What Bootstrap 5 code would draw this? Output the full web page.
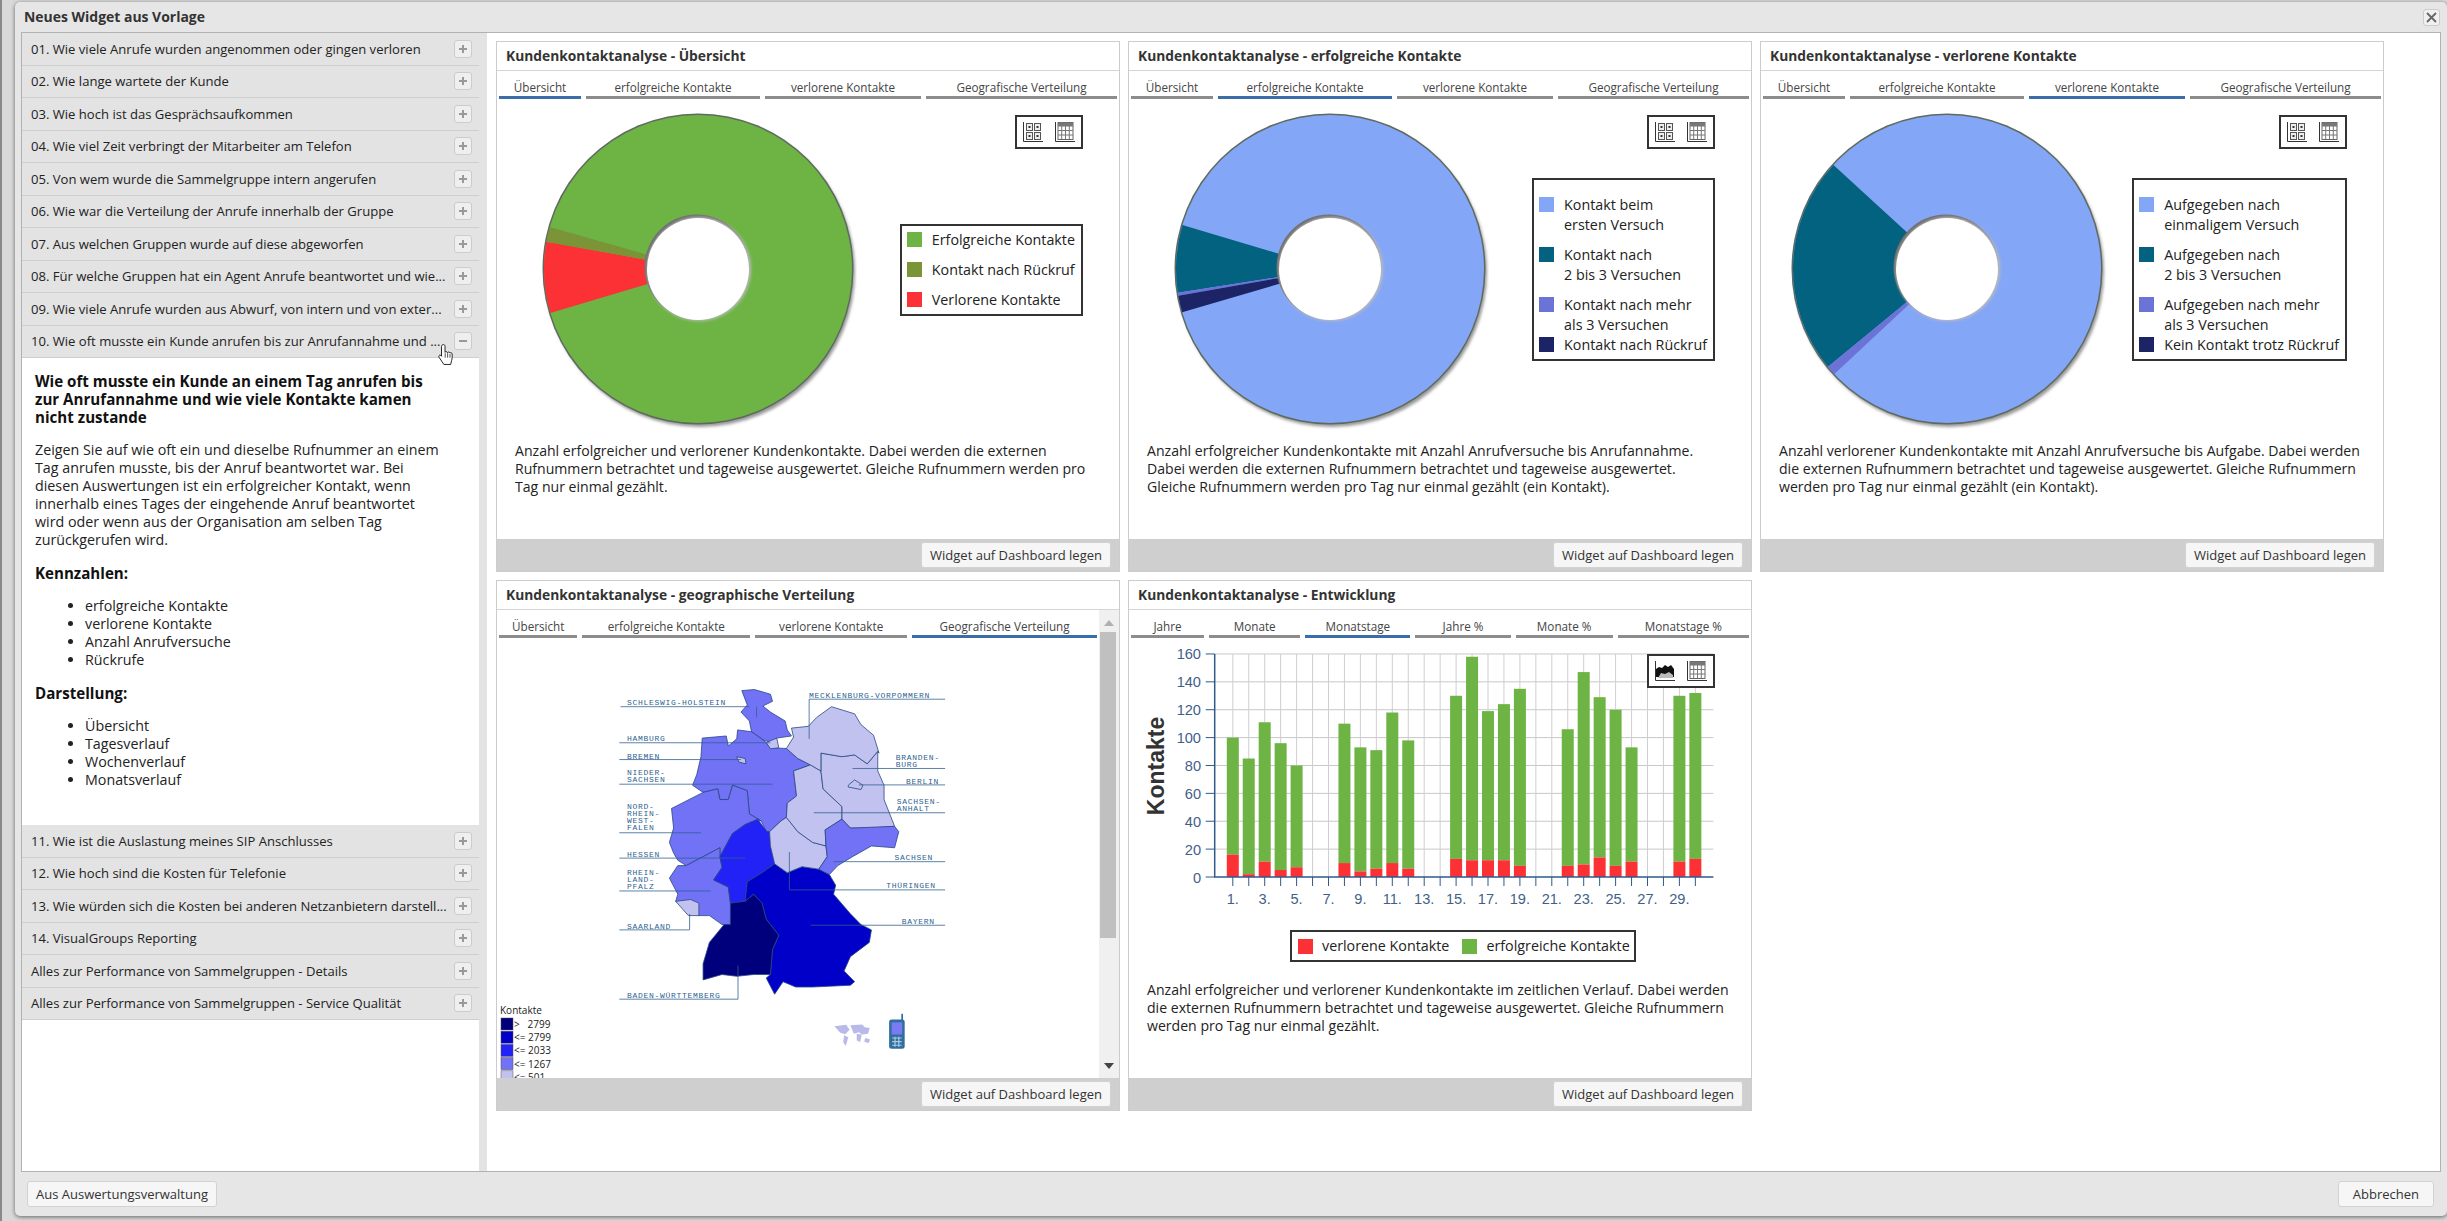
<!doctype html>
<html lang="de">

<head>
    <meta charset="utf-8">
    <meta name="viewport" content="width=device-width, initial-scale=1">
    <title>Neues Widget aus Vorlage</title>
    <link href="https://cdn.jsdelivr.net/npm/bootstrap@5.3.5/dist/css/bootstrap.min.css" rel="stylesheet">
    <style>
        html, body { height: 100%; overflow: hidden; }
        body {
            background: #d9d9d9;
            border-left: 2px solid #8a8a8a;
            font-family: "Open Sans", "Noto Sans", sans-serif;
            font-size: 13.07px;
            line-height: 18px;
            color: #222;
        }

        .wiz-window {
            width: 2432px;
            height: 1214px;
            margin: 2px 0 0 13px;
            background: #e6e6e6;
            border-radius: 5px;
            box-shadow: 0 1px 4px rgba(0, 0, 0, .55);
        }

        .wiz-title { height: 30px; padding-left: 9px; font-size: 13.96px; font-weight: 700; color: #333; }
        .wiz-close { width: 17px; height: 17px; margin-right: 7px; background: #f0f0f0; border: 1px solid #ccc; border-radius: 3px; }

        .wiz-main { width: 2420px; height: 1140px; margin-left: 6px; background: #fff; border: 1px solid #b2b2b2; }
        .wiz-foot { height: 44px; padding: 0 13px 0 12px; }

        .side { width: 457px; flex: none; position: relative; }
        .side-gap { width: 8px; flex: none; background: #e3e3e3; }
        .side .list-group-item {
            height: 32.5px;
            padding: 0 7px 0 9px;
            background: #e3e3e3;
            border: 0;
            border-bottom: 1px solid #cfcfcf;
            border-radius: 0;
            color: #222;
            white-space: nowrap;
        }
        .toggle-box { width: 18px; height: 18px; flex: none; background: #efefef; border: 1px solid #ccc; border-radius: 3px; }

        .side-detail { height: 467px; padding: 14px 12px 0 13px; color: #222; font-size: 14.27px; }
        .side-detail p, .side-detail ul { margin-bottom: 15px; }
        .side-detail ul { padding-left: 50px; }
        .side-detail b { display: block; font-size: 15.14px; color: #111; }
        .hand-cursor { position: absolute; left: 416px; top: 310px; }

        .cards-pane { padding: 8px 0 0 9px; gap: 8px; align-content: flex-start; }
        .widget.card { width: 624px; height: 531px; border: 1px solid #ccc; border-radius: 0; background: #fff; }
        .widget .card-header { height: 29px; flex: none; padding: 0 0 0 9px; background: #fff; border-bottom: 1px solid #d5d5d5; border-radius: 0; font-size: 13.8px; font-weight: 700; color: #333; display: flex; align-items: center; }
        .widget .card-footer { height: 32px; flex: none; padding: 0 8px 0 0; background: #cfcfcf; border: 0; border-radius: 0; }
        .btn.wiz-btn { height: 26px; padding: 0 8px; font-size: 13px; line-height: 24px; color: #333; background: #f6f6f6; border: 1px solid #d2d2d2; border-radius: 3px; }
        .btn.wiz-btn.is-wide { padding: 0 14px; }

        .tabs-row { height: 28px; padding: 0 2px; gap: 5px; flex: none; }
        .tab-item { text-align: center; font-size: 11.7px; line-height: 16px; padding-top: 8px; color: #444; border-bottom: 3px solid #8c8c8c; white-space: nowrap; overflow: hidden; }
        .tab-item.is-on { border-bottom-color: #3b6ea8; }

        .chart-zone { height: 343px; position: relative; flex: none; }
        .pie-svg { width: 360px; height: 343px; display: block; flex: none; }
        .icon-box { position: absolute; top: 16px; right: 36px; width: 68px; height: 34px; background: #fff; border: 2px solid #333; padding: 4px 6px; gap: 12px; }
        .chart-legend { background: #fff; border: 2px solid #333; font-size: 14.3px; line-height: 20px; color: #222; white-space: nowrap; }
        .legend-col { margin: 0 36px 2px auto; padding: 4px 6px 4px 5px; }
        .legend-row { margin-bottom: 10px; }
        .legend-row.tight { margin-bottom: 0; }
        .legend-col.has-top { padding-top: 14.5px; padding-bottom: 4px; }
        .legend-swatch { width: 15px; height: 15px; flex: none; margin: 2.5px 10px 0 0; }
        .legend-wide { width: 346px; height: 32px; margin: 7px 0 0 161px; padding: 0 6px; }
        .legend-wide .legend-swatch { margin: 0 9px 0 0; }
        .legend-gap { margin-right: 13px; }

        .widget-note { padding: 0 6px 0 18px; font-size: 14.09px; line-height: 18px; color: #222; white-space: nowrap; }

        .geo-pane { min-height: 0; }
        .geo-col { min-width: 0; }
        .geo-view { overflow: hidden; flex: 1 1 auto; }
        .geo-svg { display: block; width: 602px; height: 440px; }
        .scroll-rail { width: 20px; flex: none; background: #f0f0f0; position: relative; }
        .scroll-thumb { width: 16px; height: 306px; margin: 22px 0 0 1px; background: #c0c0c0; }
        .scroll-up, .scroll-down { position: absolute; left: 5px; width: 0; height: 0; border-left: 5px solid transparent; border-right: 5px solid transparent; }
        .scroll-up { top: 10px; border-bottom: 6px solid #b0b0b0; }
        .scroll-down { bottom: 9px; border-top: 6px solid #444; }
    </style>
</head>

<body>
    <div class="wiz-window d-flex flex-column">
        <div class="wiz-title d-flex align-items-center justify-content-between">
            <span>Neues Widget aus Vorlage</span>
            <span class="wiz-close d-flex align-items-center justify-content-center">
                <svg width="11" height="11" viewBox="0 0 11 11"><path d="M1 1 10 10M10 1 1 10" stroke="#666" stroke-width="1.8" /></svg>
            </span>
        </div>

        <div class="wiz-main d-flex">
            <div class="side">
                <div class="list-group" id="sideList"></div>
                <svg class="hand-cursor" width="18" height="24" viewBox="0 0 20 26">
                    <path d="M6 1.500c1.200 0 1.800.8 1.800 2V10c.3-1 2.400-1 2.700.3.5-.9 2.400-.8 2.700.5.6-.7 2.400-.4 2.500 1 .1 3 .2 5-.6 7.500l-1 4.200H6.500L1.500 16c-.8-1.200-.7-2.200 0-2.600.8-.5 1.700-.1 2.400 1V3.500c0-1.200.8-2 2.100-2z" fill="#fff" stroke="#111" stroke-width="1" />
                    <path d="M8 11v5M10.700 11v5M13.300 12v4" stroke="#111" stroke-width=".8" />
                </svg>
            </div>
            <div class="side-gap"></div>
            <div class="cards-pane d-flex flex-wrap flex-grow-1" id="cardsPane"></div>
        </div>

        <div class="wiz-foot d-flex align-items-center justify-content-between">
            <button class="btn wiz-btn">Aus Auswertungsverwaltung</button>
            <button class="btn wiz-btn is-wide">Abbrechen</button>
        </div>
    </div>

    <script src="https://cdn.jsdelivr.net/npm/bootstrap@5.3.5/dist/js/bootstrap.bundle.min.js"></script>
    <script>
        var rows = [
            "01. Wie viele Anrufe wurden angenommen oder gingen verloren",
            "02. Wie lange wartete der Kunde",
            "03. Wie hoch ist das Gesprächsaufkommen",
            "04. Wie viel Zeit verbringt der Mitarbeiter am Telefon",
            "05. Von wem wurde die Sammelgruppe intern angerufen",
            "06. Wie war die Verteilung der Anrufe innerhalb der Gruppe",
            "07. Aus welchen Gruppen wurde auf diese abgeworfen",
            "08. Für welche Gruppen hat ein Agent Anrufe beantwortet und wie...",
            "09. Wie viele Anrufe wurden aus Abwurf, von intern und von exter...",
            "10. Wie oft musste ein Kunde anrufen bis zur Anrufannahme und ...",
            "11. Wie ist die Auslastung meines SIP Anschlusses",
            "12. Wie hoch sind die Kosten für Telefonie",
            "13. Wie würden sich die Kosten bei anderen Netzanbietern darstell...",
            "14. VisualGroups Reporting",
            "Alles zur Performance von Sammelgruppen - Details",
            "Alles zur Performance von Sammelgruppen - Service Qualität"
        ];

        var detail =
            '<div class="side-detail">' +
            '<p><b>Wie oft musste ein Kunde an einem Tag anrufen bis<br>zur Anrufannahme und wie viele Kontakte kamen<br>nicht zustande</b></p>' +
            '<p>Zeigen Sie auf wie oft ein und dieselbe Rufnummer an einem<br>Tag anrufen musste, bis der Anruf beantwortet war. Bei<br>diesen Auswertungen ist ein erfolgreicher Kontakt, wenn<br>innerhalb eines Tages der eingehende Anruf beantwortet<br>wird oder wenn aus der Organisation am selben Tag<br>zurückgerufen wird.</p>' +
            '<p><b>Kennzahlen:</b></p>' +
            '<ul><li>erfolgreiche Kontakte</li><li>verlorene Kontakte</li><li>Anzahl Anrufversuche</li><li>Rückrufe</li></ul>' +
            '<p><b>Darstellung:</b></p>' +
            '<ul><li>Übersicht</li><li>Tagesverlauf</li><li>Wochenverlauf</li><li>Monatsverlauf</li></ul>' +
            '</div>';

        var sideHtml = "";
        for (var i = 0; i < rows.length; i++) {
            var sign = i == 9
                ? '<path d="M4 8h8" stroke="#999" stroke-width="2"/>'
                : '<path d="M4 8h8M8 4v8" stroke="#999" stroke-width="2"/>';
            sideHtml += '<div class="list-group-item d-flex align-items-center justify-content-between"><span>' + rows[i] + '</span>' +
                '<span class="toggle-box d-flex align-items-center justify-content-center"><svg width="16" height="16" viewBox="0 0 16 16">' + sign + '</svg></span></div>';
            if (i == 9) sideHtml += detail;
        }
        document.getElementById("sideList").innerHTML = sideHtml;

        var GREEN = "#6db444", OLIVE = "#7b9438", RED = "#fb3135", SKY = "#84a6f6", TEAL = "#03627f", VIOLET = "#6b73d6", NAVY = "#1c2466";
        var stdTabs = ["Übersicht", "erfolgreiche Kontakte", "verlorene Kontakte", "Geografische Verteilung"];
        var stdW = [82, 174, 156, 191];

        function wedge(cx, cy, r0, r1, a, b, color) {
            function pt(r, d) {
                var t = d * Math.PI / 180;
                return (cx + r * Math.sin(t)).toFixed(2) + " " + (cy - r * Math.cos(t)).toFixed(2);
            }
            return '<path fill="' + color + '" d="M' + pt(r1, a) + ' A' + r1 + ' ' + r1 + ' 0 0 1 ' + pt(r1, b) + ' L' + pt(r0, b) + ' A' + r0 + ' ' + r0 + ' 0 0 0 ' + pt(r0, a) + 'Z"/>';
        }

        function pie(cx, base, parts) {
            var cy = 170;
            var s = '<svg class="pie-svg" viewBox="0 0 360 343">';
            s += '<defs><filter id="soft" x="-10%" y="-10%" width="120%" height="120%"><feGaussianBlur stdDeviation="1.5"/></filter></defs>';
            s += '<circle cx="' + (cx + 2) + '" cy="' + (cy + 3) + '" r="155" fill="#9a9a9a" filter="url(#soft)"/>';
            s += '<circle cx="' + cx + '" cy="' + cy + '" r="155.5" fill="#5f6a5f"/>';
            s += '<circle cx="' + cx + '" cy="' + cy + '" r="154" fill="' + base + '"/>';
            for (var i = 0; i < parts.length; i++) s += wedge(cx, cy, 50, 154, parts[i][1], parts[i][2], parts[i][0]);
            s += '<circle cx="' + (cx - 1) + '" cy="' + (cy - 2) + '" r="52.5" fill="#6e6e6e"/>';
            s += '<circle cx="' + (cx + 1) + '" cy="' + cy + '" r="52" fill="#bbb" filter="url(#soft)"/>';
            s += '<circle cx="' + cx + '" cy="' + cy + '" r="51" fill="#fff"/>';
            return s + '</svg>';
        }

        function axisIcon(inner) {
            return '<svg width="20" height="21" viewBox="0 0 20 21"><path d="M.5 1v19.5H20" fill="none" stroke="#333" stroke-width="1"/>' + inner + '</svg>';
        }
        var gridIcon = axisIcon('<g fill="#eee" stroke="#555"><rect x="3.5" y="2.5" width="6" height="7"/><rect x="11.5" y="2.5" width="6" height="7"/><rect x="3.5" y="11.5" width="6" height="7"/><rect x="11.5" y="11.5" width="6" height="7"/></g><g fill="#333"><rect x="5.5" y="5" width="2" height="2"/><rect x="13.5" y="5" width="2" height="2"/><rect x="5.5" y="14" width="2" height="2"/><rect x="13.5" y="14" width="2" height="2"/></g>');
        var tableIcon = axisIcon('<rect x="3" y="1.5" width="15" height="17" fill="#fff" stroke="#666"/><rect x="3" y="1.5" width="15" height="4" fill="#777"/><path d="M6.7 2v16M10.5 2v16M14.3 2v16M3 9.5h15M3 14h15" stroke="#777" stroke-width="1"/>');
        var areaIcon = axisIcon('<path d="M1 17V9l3-2 3 1 3-3 3 2 3-2 3 4v8z" fill="#111"/><path d="M3 18l3-5 4 1 4-2 4 3v3z" fill="#bbb"/>');

        function iconBox(first) {
            return '<div class="icon-box d-flex">' + first + tableIcon + '</div>';
        }

        function tabs(names, widths, on) {
            var s = '<div class="tabs-row d-flex">';
            for (var i = 0; i < names.length; i++) {
                s += '<div class="tab-item' + (i == on ? ' is-on' : '') + '" style="flex:' + widths[i] + ' 1 0">' + names[i] + '</div>';
            }
            return s + '</div>';
        }

        function legend(items, extra) {
            var s = '<div class="chart-legend legend-col ' + (extra || '') + '">';
            for (var i = 0; i < items.length; i++) {
                s += '<div class="legend-row d-flex' + (items[i][2] ? ' tight' : '') + '"><span class="legend-swatch" style="background:' + items[i][0] + '"></span><span>' + items[i][1] + '</span></div>';
            }
            return s + '</div>';
        }

        function footer() {
            return '<div class="card-footer d-flex align-items-center justify-content-end mt-auto"><button class="btn wiz-btn">Widget auf Dashboard legen</button></div>';
        }

        function card(title, body) {
            return '<div class="card widget"><div class="card-header">' + title + '</div>' + body + footer() + '</div>';
        }

        function pieCard(title, on, cx, base, parts, items, extra, note) {
            return card(title, tabs(stdTabs, stdW, on) +
                '<div class="chart-zone d-flex align-items-center">' + pie(cx, base, parts) + legend(items, extra) + iconBox(gridIcon) + '</div>' +
                '<div class="widget-note">' + note + '</div>');
        }

        // Karte: Koordinaten aus dem Referenzbild, Labels als echter Text
        var LIGHT = "#c2c2f0", MID = "#7272f6";
        var states = [
            [MID, "622,335 652,332 690,345 695,365 672,378 690,395 725,420 730,445 740,462 705,468 690,478 675,475 645,450 640,420 620,395 635,375"],
            [MID, "528,468 585,462 590,490 610,470 612,445 645,450 675,475 690,495 728,497 755,525 785,543 745,560 752,630 730,650 728,690 715,700 688,730 680,730 668,700 640,680 635,615 600,600 590,640 570,640 565,610 530,620 505,600 515,570 525,520"],
            [MID, "455,665 530,620 565,610 570,640 590,640 600,600 635,615 640,680 668,700 660,695 630,710 600,735 570,800 570,775 530,800 490,825 470,810 460,790 450,760 460,720"],
            [MID, "570,775 570,800 575,830 555,865 590,885 595,930 595,990 575,990 545,965 520,965 465,925 470,905 450,860 470,825 490,825 530,800"],
            ["#2222f6", "660,695 672,715 682,730 688,730 690,770 700,820 670,845 635,870 630,925 595,930 590,885 555,865 575,830 570,800 600,735 630,710"],
            [LIGHT, "465,925 500,920 520,930 520,965 495,965"],
            ["#0000c8", "635,870 670,845 700,820 730,845 765,828 805,835 830,850 845,880 840,905 880,960 905,990 930,1005 925,1040 880,1080 865,1120 890,1150 880,1160 790,1165 750,1165 720,1150 700,1185 680,1140 690,1130 695,1060 710,1020 680,975 670,930 650,905 630,925"],
            ["#00007c", "595,930 630,925 650,905 670,930 680,975 710,1020 695,1060 690,1130 650,1130 610,1135 575,1130 530,1145 530,1100 545,1040 580,990 595,990"],
            [LIGHT, "688,730 715,700 728,690 755,730 790,760 822,770 825,800 805,835 765,828 730,845 700,820 690,770"],
            [LIGHT, "745,560 785,543 810,560 815,610 860,660 860,695 820,725 822,770 790,760 755,730 728,690 730,650 752,630"],
            [LIGHT, "810,510 860,520 890,515 920,540 945,505 945,560 960,600 960,640 985,715 925,720 880,720 860,695 860,660 815,610 810,560"],
            [LIGHT, "740,440 780,435 800,410 835,380 890,400 905,430 935,460 948,510 945,505 920,540 890,515 860,520 810,510 810,560 785,543 755,525 728,497 745,465"],
            [MID, "820,725 860,695 880,720 985,715 995,730 985,775 930,770 885,800 850,825 830,850 805,835 825,800 822,770"],
            [LIGHT, "680,480 705,468 710,495 690,498"],
            [LIGHT, "610,520 630,525 632,540 615,535"],
            [LIGHT, "875,600 890,585 910,600 905,612 875,605"]
        ];
        var mapLabels = [
            [349, 368, "SCHLESWIG-HOLSTEIN"], [782, 346, "MECKLENBURG-VORPOMMERN"], [349, 468, "HAMBURG"], [349, 517, "BREMEN"],
            [349, 564, "NIEDER-"], [349, 583, "SACHSEN"], [349, 657, "NORD-"], [349, 677, "RHEIN-"], [349, 698, "WEST-"], [349, 718, "FALEN"],
            [349, 792, "HESSEN"], [349, 842, "RHEIN-"], [349, 862, "LAND-"], [349, 883, "PFALZ"], [349, 993, "SAARLAND"], [349, 1186, "BADEN-WÜRTTEMBERG"],
            [988, 521, "BRANDEN-"], [988, 541, "BURG"], [1012, 588, "BERLIN"], [990, 644, "SACHSEN-"], [990, 664, "ANHALT"],
            [985, 802, "SACHSEN"], [965, 879, "THÜRINGEN"], [1002, 980, "BAYERN"]
        ];
        var mapLines = "M334 380H640M657 380V410M782 359H1105M782 359V470M331 481H690M331 528H620M331 597H695M331 733H525M331 804H630M331 896H548M331 1005H498V960M331 1199H613V1105M885 553H1105M900 599H1105M793 677H1105M840 814H1105M735 787V893H1105M785 992H1105";

        function mapSvg() {
            var s = '<svg class="geo-svg" viewBox="0 0 602 440"><g transform="translate(-17,-67) scale(.4209,.3571)">';
            for (var i = 0; i < states.length; i++) {
                s += '<polygon points="' + states[i][1] + '" fill="' + states[i][0] + '" stroke="#24467e" stroke-width="2" stroke-linejoin="round"/>';
            }
            s += '<path d="' + mapLines + '" fill="none" stroke="#2f5f90" stroke-width="2"/>';
            // Welt- und Telefon-Symbol
            s += '<g fill="#b9b9ea"><path d="M842 1275l28-4 8 14-10 12-12-4zM865 1300l10 6-6 24-6-10zM880 1272l28-2 6 8 12 2-4 16-14 2-8-6-12 4zM895 1296l12 2-4 22-8-6zM915 1308l12 4-4 10-10-4z"/></g>';
            s += '<path d="M1003 1240v18" stroke="#2f6f9f" stroke-width="4"/><rect x="972" y="1256" width="37" height="82" rx="6" fill="#2f6f9f"/><rect x="978" y="1264" width="25" height="34" fill="#7a7af2"/><path d="M979 1308h23M979 1318h23M979 1328h23M986 1304v28M995 1304v28" stroke="#a9c8dc" stroke-width="3"/>';
            s += '</g>';
            for (var j = 0; j < mapLabels.length; j++) {
                var l = mapLabels[j];
                s += '<text x="' + (l[0] * .4209 - 17).toFixed(1) + '" y="' + (l[1] * .3571 - 64).toFixed(1) + '" font-family="Liberation Mono, monospace" font-size="8" letter-spacing=".7" fill="#2f5f90">' + l[2] + '</text>';
            }
            var leg = [["#00007c", ">   2799"], ["#0000c8", "&lt;= 2799"], ["#2222f6", "&lt;= 2033"], ["#7272f6", "&lt;= 1267"], ["#c2c2f0", "&lt;= 501"]];
            s += '<text x="3" y="376" font-family="Open Sans, sans-serif" font-size="10" fill="#222">Kontakte</text>';
            for (var k = 0; k < leg.length; k++) {
                var y = 380 + k * 13.2;
                s += '<rect x="4" y="' + y + '" width="12" height="12" fill="' + leg[k][0] + '" stroke="#555" stroke-width=".5"/>';
                s += '<text x="17" y="' + (y + 10) + '" xml:space="preserve" font-family="Open Sans, sans-serif" font-size="10" fill="#222">' + leg[k][1] + '</text>';
            }
            return s + '</svg>';
        }

        function geoCard() {
            return card("Kundenkontaktanalyse - geographische Verteilung",
                '<div class="geo-pane d-flex flex-grow-1"><div class="geo-col flex-grow-1 d-flex flex-column">' +
                tabs(stdTabs, [78, 167, 151, 184], 3) +
                '<div class="geo-view">' + mapSvg() + '</div></div>' +
                '<div class="scroll-rail"><div class="scroll-up"></div><div class="scroll-thumb"></div><div class="scroll-down"></div></div></div>');
        }

        // Tage 1-30: [gesamt, verloren]
        var days = [[100, 16], [85, 2], [111, 11], [96, 5], [80, 7], [0, 0], [0, 0], [110, 10], [93, 4], [91, 6], [118, 10], [98, 6], [0, 0], [0, 0], [130, 13], [158, 12], [119, 12], [124, 12], [135, 8], [0, 0], [0, 0], [106, 8], [147, 9], [129, 14], [120, 8], [93, 11], [0, 0], [0, 0], [130, 11], [132, 13]];

        function barChart() {
            var left = 85.7, right = 584.4, base = 239, unit = 1.394, pitch = 15.95, first = 103.8;
            var s = '<svg width="622" height="285" viewBox="0 0 622 285" class="d-block" font-family="Liberation Sans, sans-serif">';
            s += '<text transform="translate(35,128) rotate(-90)" text-anchor="middle" font-size="23" font-weight="700" fill="#333">Kontakte</text>';
            for (var v = 0; v <= 160; v += 20) {
                var y = base - v * unit;
                if (v) s += '<path d="M' + left + ' ' + y + 'H' + right + '" stroke="#c8c8c8"/>';
                s += '<path d="M' + (left - 9) + ' ' + y + 'H' + left + '" stroke="#2f5a8a"/>';
                s += '<text x="72" y="' + (y + 5.5) + '" text-anchor="end" font-size="14.6" fill="#3f5f8a">' + v + '</text>';
            }
            for (var d = 0; d < 30; d++) {
                var x = first + d * pitch;
                s += '<path d="M' + x + ' 16V' + base + '" stroke="#cfcfcf"/>';
            }
            for (var b = 0; b < 30; b++) {
                if (!days[b][0]) continue;
                var bx = first + b * pitch - 6;
                s += '<rect x="' + bx + '" y="' + (base - days[b][0] * unit) + '" width="12" height="' + ((days[b][0] - days[b][1]) * unit) + '" fill="' + GREEN + '"/>';
                s += '<rect x="' + bx + '" y="' + (base - days[b][1] * unit) + '" width="12" height="' + (days[b][1] * unit) + '" fill="' + RED + '"/>';
            }
            s += '<path d="M' + left + ' 16V' + base + 'H' + right + '" fill="none" stroke="#2f5a8a" stroke-width="1.5"/>';
            for (var t = 0; t < 30; t++) {
                var tx = first + t * pitch;
                s += '<path d="M' + tx + ' ' + base + 'v9" stroke="#2f5a8a"/>';
                if (t % 2 == 0) s += '<text x="' + tx + '" y="266" text-anchor="middle" font-size="14.6" fill="#3f5f8a">' + (t + 1) + '.</text>';
            }
            return s + '</svg>';
        }

        function trendCard() {
            var names = ["Jahre", "Monate", "Monatstage", "Jahre %", "Monate %", "Monatstage %"];
            return card("Kundenkontaktanalyse - Entwicklung", tabs(names, [73, 91, 105, 95, 97, 131], 2) +
                '<div class="chart-zone">' + barChart() +
                '<div class="chart-legend legend-wide d-flex align-items-center"><span class="legend-swatch" style="background:' + RED + '"></span><span class="legend-gap">verlorene Kontakte</span><span class="legend-swatch" style="background:' + GREEN + '"></span><span>erfolgreiche Kontakte</span></div>' +
                iconBox(areaIcon) + '</div>' +
                '<div class="widget-note">Anzahl erfolgreicher und verlorener Kundenkontakte im zeitlichen Verlauf. Dabei werden<br>die externen Rufnummern betrachtet und tageweise ausgewertet. Gleiche Rufnummern<br>werden pro Tag nur einmal gezählt.</div>');
        }

        document.getElementById("cardsPane").innerHTML =
            pieCard("Kundenkontaktanalyse - Übersicht", 0, 201, GREEN,
                [[RED, 253.4, 280.2], [OLIVE, 280.2, 285.8]],
                [[GREEN, "Erfolgreiche Kontakte"], [OLIVE, "Kontakt nach Rückruf"], [RED, "Verlorene Kontakte", true]], "",
                "Anzahl erfolgreicher und verlorener Kundenkontakte. Dabei werden die externen<br>Rufnummern betrachtet und tageweise ausgewertet. Gleiche Rufnummern werden pro<br>Tag nur einmal gezählt.") +
            pieCard("Kundenkontaktanalyse - erfolgreiche Kontakte", 1, 201, SKY,
                [[TEAL, 261.1, 286.6], [VIOLET, 260, 261.1], [NAVY, 253.7, 260]],
                [[SKY, "Kontakt beim<br>ersten Versuch"], [TEAL, "Kontakt nach<br>2 bis 3 Versuchen"], [VIOLET, "Kontakt nach mehr<br>als 3 Versuchen", true], [NAVY, "Kontakt nach Rückruf", true]], "has-top",
                "Anzahl erfolgreicher Kundenkontakte mit Anzahl Anrufversuche bis Anrufannahme.<br>Dabei werden die externen Rufnummern betrachtet und tageweise ausgewertet.<br>Gleiche Rufnummern werden pro Tag nur einmal gezählt (ein Kontakt).") +
            pieCard("Kundenkontaktanalyse - verlorene Kontakte", 2, 186, SKY,
                [[TEAL, 230.6, 312.5], [VIOLET, 227, 230.6]],
                [[SKY, "Aufgegeben nach<br>einmaligem Versuch"], [TEAL, "Aufgegeben nach<br>2 bis 3 Versuchen"], [VIOLET, "Aufgegeben nach mehr<br>als 3 Versuchen", true], [NAVY, "Kein Kontakt trotz Rückruf", true]], "has-top",
                "Anzahl verlorener Kundenkontakte mit Anzahl Anrufversuche bis Aufgabe. Dabei werden<br>die externen Rufnummern betrachtet und tageweise ausgewertet. Gleiche Rufnummern<br>werden pro Tag nur einmal gezählt (ein Kontakt).") +
            geoCard() + trendCard();
    </script>
</body>

</html>
